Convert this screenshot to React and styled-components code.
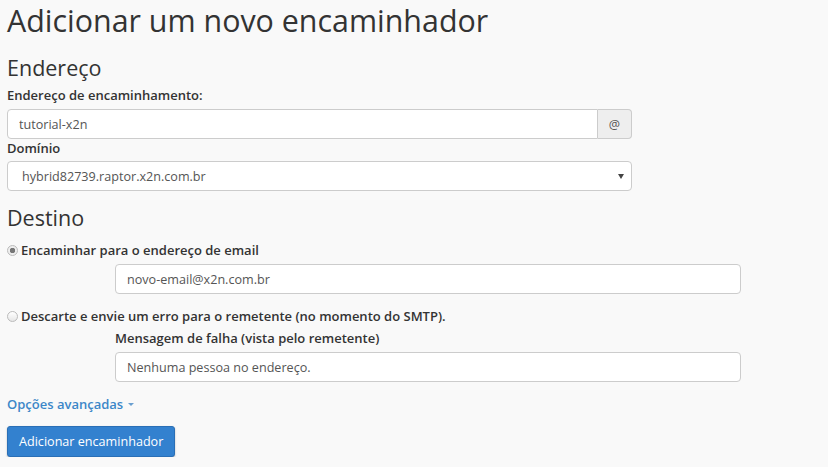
import React, { useState } from 'react';
import styled, { createGlobalStyle } from 'styled-components';

const GlobalStyle = createGlobalStyle`
  body {
    margin: 0;
    background: #f9f9f9;
    font-family: "Open Sans", "Liberation Sans", sans-serif;
    color: #333;
  }
  * { box-sizing: border-box; }
`;

const Page = styled.div`
  padding: 0 7px;
`;

const Title = styled.h1`
  font-size: 30.4px;
  font-weight: 400;
  line-height: 33px;
  margin: 4px 0 0;
`;

const SectionTitle = styled.h2`
  font-size: 21.5px;
  font-weight: 400;
  line-height: 26px;
  margin: ${(p) => p.$top || 14}px 0 ${(p) => p.$bottom || 2}px;
`;

const Label = styled.label`
  display: block;
  font-size: 13px;
  font-weight: 600;
  line-height: 20px;
  margin: ${(p) => p.$top || 0}px 0 ${(p) => p.$bottom || 2}px;
`;

const Group = styled.div`
  display: flex;
  width: ${(p) => p.$width || 625}px;
  margin-left: ${(p) => p.$indent || 0}px;
`;

const Input = styled.input`
  flex: 1;
  height: 30px;
  padding: 0 11px;
  border: 1px solid #ccc;
  border-radius: ${(p) => (p.$addon ? '4px 0 0 4px' : '4px')};
  background: #fff;
  font-family: inherit;
  font-size: 12.6px;
  color: #555;
  outline: none;
`;

const Addon = styled.span`
  width: 34px;
  height: 30px;
  display: flex;
  align-items: center;
  justify-content: center;
  border: 1px solid #ccc;
  border-left: none;
  border-radius: 0 4px 4px 0;
  background: #eee;
  font-size: 12.6px;
  color: #555;
`;

const SelectBox = styled.div`
  flex: 1;
  height: 30px;
  display: flex;
  align-items: center;
  justify-content: space-between;
  padding: 0 7px 0 14px;
  border: 1px solid #ccc;
  border-radius: 4px;
  background: #fff;
  font-size: 12.6px;
  color: #555;
`;

const Caret = styled.span`
  width: 0;
  height: 0;
  border-left: 3px solid transparent;
  border-right: 3px solid transparent;
  border-top: ${(p) => p.$size || 5}px solid ${(p) => p.$color || '#444'};
  display: inline-block;
`;

const RadioRow = styled.label`
  display: flex;
  align-items: center;
  gap: 3px;
  font-size: 13px;
  font-weight: 600;
  line-height: 20px;
  margin: ${(p) => p.$top || 0}px 0 ${(p) => p.$bottom || 0}px;
  cursor: pointer;
`;

const RadioDot = styled.span`
  width: 11px;
  height: 11px;
  border-radius: 50%;
  border: 1px solid #bbb;
  background: ${(p) => (p.$checked ? 'radial-gradient(circle, #777 0 2.5px, #eee 3px)' : 'linear-gradient(#fff, #e6e6e6)')};
  flex: none;
`;

const Indented = styled.div`
  margin-left: 108px;
`;

const AdvancedLink = styled.a`
  display: inline-flex;
  align-items: center;
  gap: 5px;
  margin-top: 12px;
  font-size: 13px;
  font-weight: 600;
  line-height: 20px;
  color: #3c87c8;
  text-decoration: none;
  cursor: pointer;
`;

const Button = styled.button`
  display: block;
  margin-top: 12px;
  height: 31px;
  padding: 0 11px;
  background: #3381cf;
  border: 1px solid #2a6fb6;
  border-radius: 3px;
  color: #fff;
  font-family: inherit;
  font-size: 12.6px;
  box-shadow: 0 1px 2px rgba(0, 0, 0, 0.25);
  cursor: pointer;
`;

export default function App() {
  const [mode, setMode] = useState('fwd');
  const [address, setAddress] = useState('tutorial-x2n');
  const [dest, setDest] = useState('novo-email@x2n.com.br');
  const [fail, setFail] = useState('Nenhuma pessoa no endereço.');

  return (
    <Page>
      <GlobalStyle />
      <Title>Adicionar um novo encaminhador</Title>
      <SectionTitle $top={18} $bottom={4}>Endereço</SectionTitle>
      <Label $bottom={4}>Endereço de encaminhamento:</Label>
      <Group>
        <Input $addon value={address} onChange={(e) => setAddress(e.target.value)} />
        <Addon>@</Addon>
      </Group>
      <Label $top={-1} $bottom={3}>Domínio</Label>
      <Group>
        <SelectBox>
          <span>hybrid82739.raptor.x2n.com.br</span>
          <Caret />
        </SelectBox>
      </Group>
      <SectionTitle $top={14}>Destino</SectionTitle>
      <RadioRow $top={9} $bottom={4} onClick={() => setMode('fwd')}>
        <RadioDot $checked={mode === 'fwd'} />
        Encaminhar para o endereço de email
      </RadioRow>
      <Group $indent={108} $width={626}>
        <Input value={dest} onChange={(e) => setDest(e.target.value)} />
      </Group>
      <RadioRow $top={12} onClick={() => setMode('fail')}>
        <RadioDot $checked={mode === 'fail'} />
        Descarte e envie um erro para o remetente (no momento do SMTP).
      </RadioRow>
      <Indented>
        <Label $top={2} $bottom={4}>Mensagem de falha (vista pelo remetente)</Label>
        <Group $width={626}>
          <Input value={fail} onChange={(e) => setFail(e.target.value)} />
        </Group>
      </Indented>
      <AdvancedLink>
        Opções avançadas <Caret $size={3} $color="#6a9fd0" />
      </AdvancedLink>
      <Button>Adicionar encaminhador</Button>
    </Page>
  );
}
